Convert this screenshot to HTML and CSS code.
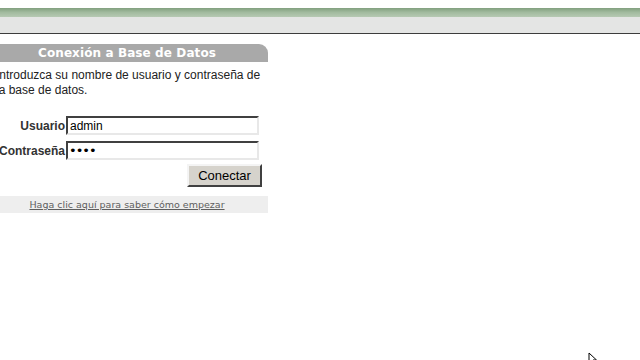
FILE: index.html
```html
<!DOCTYPE html>
<html lang="es">
<head>
<meta charset="utf-8">
<title>Conexión a Base de Datos</title>
<link rel="stylesheet" href="styles.css">
</head>
<body>
<div class="topbar">
  <div class="green"></div>
  <div class="gray"></div>
</div>
<div class="panel">
  <div class="panel-title">Conexión a Base de Datos</div>
  <p class="intro">Introduzca su nombre de usuario y contraseña de la base de datos.</p>
  <form class="login">
    <div class="row">
      <label class="label" for="u">Usuario</label>
      <input class="field" id="u" type="text" value="admin">
    </div>
    <div class="row">
      <label class="label" for="p">Contraseña</label>
      <input class="field pass" id="p" type="password" value="1234">
    </div>
    <div class="actions">
      <button class="btn" type="button">Conectar</button>
    </div>
  </form>
  <div class="help"><a href="#">Haga clic aquí para saber cómo empezar</a></div>
</div>
<svg class="cursor" width="10" height="14" viewBox="0 0 10 14"><path d="M1 1 L1 11 L3.5 8.5 L5.5 13 L7 12.3 L5 8 L8.5 8 Z" fill="#fff" stroke="#000" stroke-width="1"/></svg>
</body>
</html>
```
FILE: styles.css
```css
html, body {
  margin: 0;
  padding: 0;
  background: #fff;
}
body {
  font-family: "Liberation Sans", Arial, sans-serif;
  font-size: 12px;
  color: #222;
  overflow: hidden;
  height: 360px;
  position: relative;
}
.topbar {
  padding-top: 8px;
}
.green {
  height: 9px;
  background: linear-gradient(#82a07f, #a2bb9f 50%, #b6c9b3);
}
.gray {
  height: 16px;
  background: #e4e5e4;
  border-bottom: 1px solid #3c3c3c;
}
.panel {
  width: 282px;
  margin: 10px 0 0 -14px;
}
.panel-title {
  height: 18px;
  line-height: 18px;
  background: #a9a9a9;
  border-top-right-radius: 9px;
  color: #fff;
  font-family: "DejaVu Sans", Verdana, sans-serif;
  font-weight: bold;
  font-size: 12px;
  letter-spacing: 0.1px;
  text-align: center;
}
.intro {
  margin: 6px 0 0 10px;
  width: 272px;
  line-height: 15px;
  color: #222;
}
.login {
  margin-top: 18px;
}
.row {
  display: flex;
  align-items: center;
  height: 19px;
  margin-bottom: 6px;
}
.label {
  width: 79px;
  text-align: right;
  font-weight: bold;
  color: #333;
  padding-right: 1px;
}
.field {
  box-sizing: border-box;
  width: 193px;
  height: 19px;
  margin: 0;
  padding: 0 2px;
  border: 2px solid;
  border-color: #404040 #e8e8e8 #e8e8e8 #404040;
  font-family: "Liberation Sans", Arial, sans-serif;
  font-size: 12px;
  color: #000;
  background: #fff;
}
.field.pass {
  font-family: "DejaVu Sans", Verdana, sans-serif;
  font-size: 13px;
  letter-spacing: -1px;
  padding-left: 1px;
}
.actions {
  display: flex;
  justify-content: flex-end;
  width: 276px;
  margin-top: -2px;
}
.btn {
  box-sizing: border-box;
  width: 75px;
  height: 23px;
  margin: 0;
  padding: 0;
  background: #d6d3cc;
  border: 2px solid;
  border-color: #f4f4f4 #404040 #404040 #f4f4f4;
  font-family: "Liberation Sans", Arial, sans-serif;
  font-size: 13px;
  color: #000;
}
.help {
  margin-top: 9px;
  height: 17px;
  line-height: 17px;
  background: #eeeeee;
  text-align: center;
}
.help a {
  font-family: "DejaVu Sans", Verdana, sans-serif;
  font-size: 9.5px;
  color: #5e5e5e;
  text-decoration: underline;
}
.cursor {
  position: absolute;
  left: 588px;
  top: 352px;
}
```
